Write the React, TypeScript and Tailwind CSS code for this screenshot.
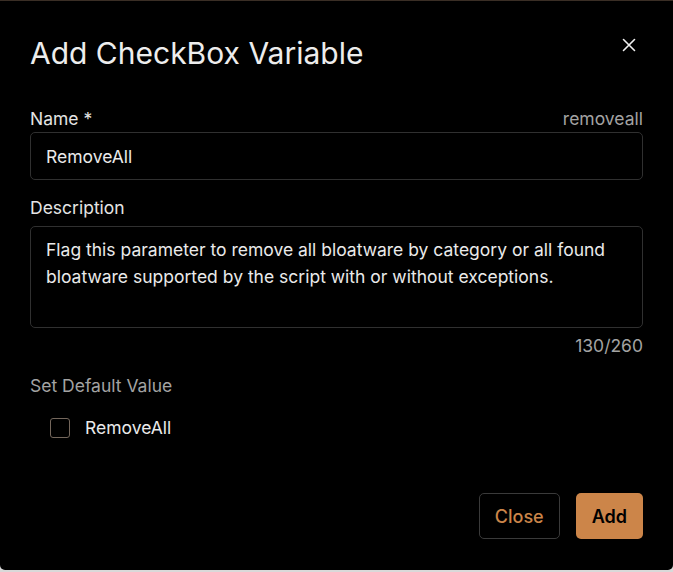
import React, { useState } from 'react';

export default function App() {
  const [name, setName] = useState('RemoveAll');
  const [description, setDescription] = useState(
    'Flag this parameter to remove all bloatware by category or all found bloatware supported by the script with or without exceptions.'
  );
  const [checked, setChecked] = useState(false);

  return (
    <div className="w-full h-[572px] bg-[#d9d9d9] font-['Inter',sans-serif]">
      <div className="h-[570px] bg-black border-t border-[#3a2e25] rounded-b-[5px] px-[30px] flex flex-col">
        {/* Header */}
        <div className="flex items-start justify-between pt-[34px]">
          <h2 className="text-[30px] leading-[36px] text-[#ededed]">Add CheckBox Variable</h2>
          <button type="button" className="mt-[-2px] mr-[2px] w-6 h-6 flex items-center justify-center text-[#f0f0f0]">
            <svg width="14" height="14" viewBox="0 0 14 14" fill="none" stroke="currentColor" strokeWidth="1.6" strokeLinecap="round">
              <path d="M1.5 1.5l11 11M12.5 1.5l-11 11" />
            </svg>
          </button>
        </div>

        {/* Name */}
        <div className="mt-[36px] flex items-center justify-between text-[17.5px] leading-[24px]">
          <label className="text-[#e4e4e4]">Name *</label>
          <span className="text-[#a3a3a3]">removeall</span>
        </div>
        <input
          type="text"
          value={name}
          onChange={(e) => setName(e.target.value)}
          className="mt-[1px] h-[48px] w-full rounded-[5px] border border-[#303030] bg-black px-[15px] text-[17.5px] text-[#eaeaea] outline-none"
        />

        {/* Description */}
        <label className="mt-[16px] text-[17.5px] leading-[24px] text-[#e4e4e4]">Description</label>
        <textarea
          value={description}
          onChange={(e) => setDescription(e.target.value)}
          className="mt-[6px] h-[102px] w-full resize-none rounded-[5px] border border-[#303030] bg-black px-[15px] pt-[10px] text-[17.5px] leading-[26.5px] text-[#eaeaea] outline-none"
        />
        <div className="mt-[6px] text-right text-[17.5px] leading-[24px] text-[#a3a3a3]">
          {description.length}/260
        </div>

        {/* Default value */}
        <div className="mt-[16px] text-[17.5px] leading-[24px] text-[#a3a3a3]">Set Default Value</div>
        <label className="mt-[18px] ml-[20px] flex items-center gap-[15px] text-[17.5px] leading-[24px] text-[#eaeaea]">
          <span
            onClick={() => setChecked(!checked)}
            className="w-[20px] h-[20px] rounded-[3px] border border-[#74675c] bg-black"
          />
          RemoveAll
        </label>

        {/* Footer */}
        <div className="mt-[53px] flex justify-end gap-4">
          <button
            type="button"
            className="h-[46px] px-[15px] rounded-[5px] border border-[#3a3a3a] bg-black text-[18px] font-medium text-[#cb8549]"
          >
            Close
          </button>
          <button
            type="button"
            className="h-[46px] px-4 rounded-[5px] bg-[#cc8549] text-[18px] font-semibold text-black"
          >
            Add
          </button>
        </div>
      </div>
    </div>
  );
}
